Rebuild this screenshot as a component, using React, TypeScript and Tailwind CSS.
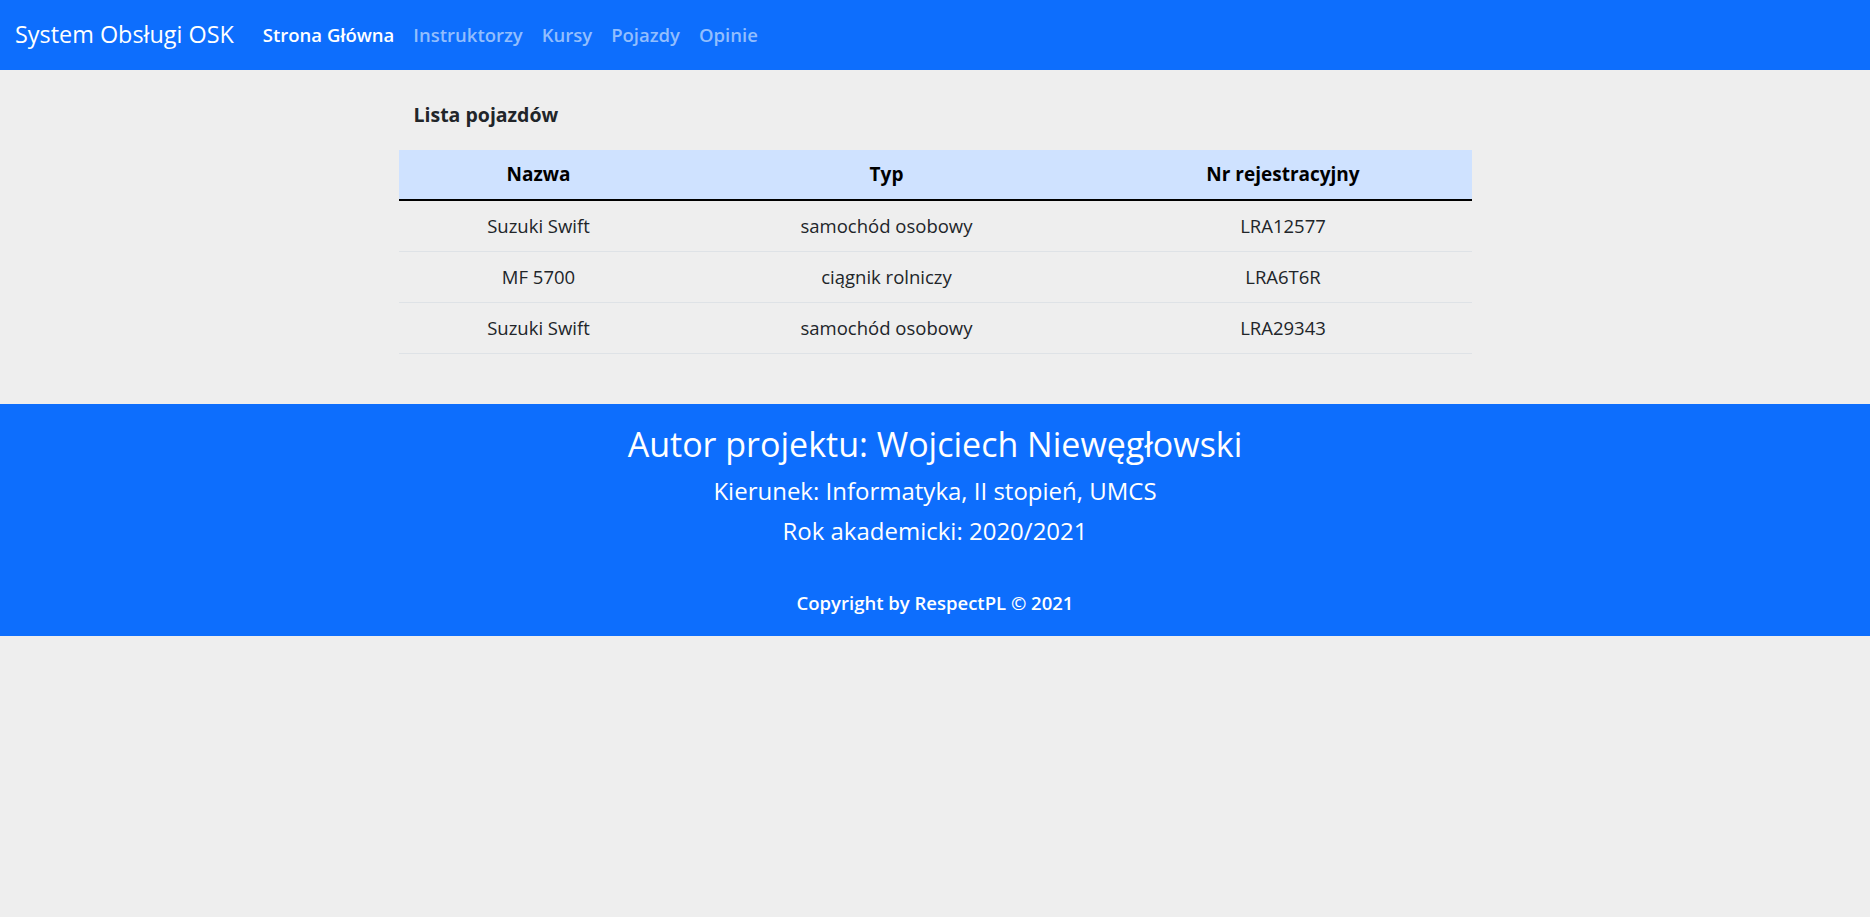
const vehicles = [
  { name: "Suzuki Swift", type: "samochód osobowy", plate: "LRA12577" },
  { name: "MF 5700", type: "ciągnik rolniczy", plate: "LRA6T6R" },
  { name: "Suzuki Swift", type: "samochód osobowy", plate: "LRA29343" },
];

const links = ["Instruktorzy", "Kursy", "Pojazdy", "Opinie"];

export default function App() {
  return (
    <div className="min-h-[917px] bg-[#eeeeee] text-[#212529] font-['Open_Sans',sans-serif]">
      {/* Navbar */}
      <nav className="h-[70px] bg-[#0d6efd] flex items-center px-[15px]">
        <span className="text-[23.4px] text-white mr-[29px]">System Obsługi OSK</span>
        <div className="flex items-center gap-[19px] text-[18.5px]">
          <span className="text-white font-semibold">Strona Główna</span>
          {links.map((l) => (
            <span key={l} className="text-[#92befe] font-semibold">{l}</span>
          ))}
        </div>
      </nav>

      {/* Content */}
      <main className="w-[1073px] mx-auto pt-[33px] pb-[50px]">
        <h5 className="px-[15px] text-[19.5px] font-bold leading-[24px] mb-[23px]">Lista pojazdów</h5>
        <table className="w-full border-collapse text-[18.5px]">
          <thead>
            <tr className="bg-[#cfe2ff] border-b-2 border-black">
              <th className="w-[280px] h-[50px] text-[19px] font-bold text-black">Nazwa</th>
              <th className="w-[416px] text-[19px] font-bold text-black">Typ</th>
              <th className="text-[19px] font-bold text-black">Nr rejestracyjny</th>
            </tr>
          </thead>
          <tbody>
            {vehicles.map((v, i) => (
              <tr key={i} className="border-b border-[#dee2e6]">
                <td className="h-[51px] text-center">{v.name}</td>
                <td className="text-center">{v.type}</td>
                <td className="text-center">{v.plate}</td>
              </tr>
            ))}
          </tbody>
        </table>
      </main>

      {/* Footer */}
      <footer className="h-[232px] bg-[#0d6efd] text-white text-center pt-[13px]">
        <h2 className="text-[34px] leading-[54px]">Autor projektu: Wojciech Niewęgłowski</h2>
        <h4 className="text-[24px] leading-[40px]">Kierunek: Informatyka, II stopień, UMCS</h4>
        <h4 className="text-[24px] leading-[40px]">Rok akademicki: 2020/2021</h4>
        <p className="text-[18.5px] font-semibold leading-[28px] mt-[38px]">Copyright by RespectPL © 2021</p>
      </footer>
    </div>
  );
}
